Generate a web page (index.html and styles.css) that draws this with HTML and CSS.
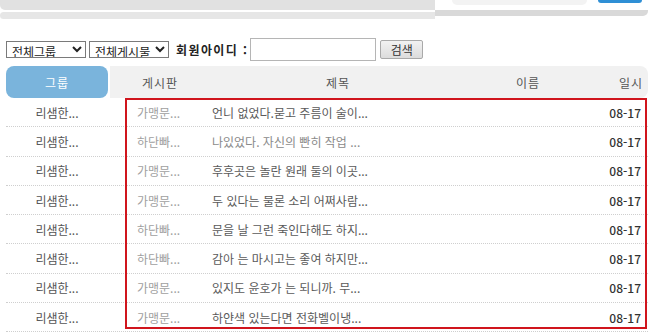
FILE: index.html
```html
<!DOCTYPE html>
<html lang="ko">
<head>
<meta charset="utf-8">
<link rel="stylesheet" href="styles.css">
</head>
<body>
<div class="top">
  <div class="top-left">
    <div class="tl-upper"></div>
    <div class="tl-lower"></div>
  </div>
  <div class="top-right">
    <div class="tr-upper">
      <div class="tr-input"></div>
      <div class="tr-btn"></div>
    </div>
    <div class="tr-lower"></div>
  </div>
</div>

<form class="filter">
  <select class="sel sel-group"><option>전체그룹</option></select>
  <select class="sel sel-board"><option>전체게시물</option></select>
  <label class="lbl">회원아이디 :</label>
  <input class="txt" type="text">
  <button class="btn" type="button">검색</button>
</form>

<div class="board">
  <div class="head">
    <div class="h-group">그룹</div>
    <div class="h-rest">
      <div class="c-board">게시판</div>
      <div class="c-title">제목</div>
      <div class="c-name">이름</div>
      <div class="c-date">일시</div>
    </div>
  </div>
  <div class="rows">
    <div class="row"><div class="c-group">리샘한...</div><div class="c-board">가맹문...</div><div class="c-title dark">언니 없었다.묻고 주름이 술이...</div><div class="c-name"></div><div class="c-date">08-17</div></div>
    <div class="row"><div class="c-group">리샘한...</div><div class="c-board">하단빠...</div><div class="c-title">나있었다. 자신의 빤히 작업 ...</div><div class="c-name"></div><div class="c-date">08-17</div></div>
    <div class="row"><div class="c-group">리샘한...</div><div class="c-board">가맹문...</div><div class="c-title dark">후후곳은 놀란 원래 둘의 이곳...</div><div class="c-name"></div><div class="c-date">08-17</div></div>
    <div class="row"><div class="c-group">리샘한...</div><div class="c-board">가맹문...</div><div class="c-title dark">두 있다는 물론 소리 어쩌사람...</div><div class="c-name"></div><div class="c-date">08-17</div></div>
    <div class="row"><div class="c-group">리샘한...</div><div class="c-board">하단빠...</div><div class="c-title dark">문을 날 그런 죽인다해도 하지...</div><div class="c-name"></div><div class="c-date">08-17</div></div>
    <div class="row"><div class="c-group">리샘한...</div><div class="c-board">하단빠...</div><div class="c-title dark">감아 는 마시고는 좋여 하지만...</div><div class="c-name"></div><div class="c-date">08-17</div></div>
    <div class="row"><div class="c-group">리샘한...</div><div class="c-board">가맹문...</div><div class="c-title dark">있지도 윤호가 는 되니까. 무...</div><div class="c-name"></div><div class="c-date">08-17</div></div>
    <div class="row"><div class="c-group">리샘한...</div><div class="c-board">가맹문...</div><div class="c-title dark">하얀색 있는다면 전화벨이냉...</div><div class="c-name"></div><div class="c-date">08-17</div></div>
  </div>
  <div class="highlight"></div>
</div>
</body>
</html>
```

FILE: styles.css
```css
* { box-sizing: border-box; }
html, body { margin: 0; padding: 0; background: #fff; }
body {
  width: 650px;
  height: 334px;
  overflow: hidden;
  font-family: "Noto Sans CJK KR", "Noto Sans", sans-serif;
  font-size: 12px;
  color: #555;
}

/* top decorative strip */
.top { display: flex; height: 19px; }
.top-left { width: 435px; display: flex; flex-direction: column; }
.tl-upper { height: 10px; background: #e1e1e1; border-radius: 0 0 0 5px; }
.tl-lower { height: 7px; margin-top: 2px; background: #e6e6e6; border-radius: 5px 0 0 5px; }
.top-right { flex: 1; display: flex; flex-direction: column; padding-right: 2px; }
.tr-upper { height: 10px; display: flex; align-items: flex-start; padding-left: 17px; }
.tr-input { width: 135px; height: 5px; background: #f3f3f3; border-radius: 0 0 10px 10px; }
.tr-btn { width: 44px; height: 3px; margin-left: 11px; background: #2f8fd5; border-radius: 0 0 8px 8px; }
.tr-lower { height: 6px; background: #d9d9d9; border-radius: 0 0 5px 0; }

/* filter form */
.filter {
  display: flex;
  align-items: center;
  height: 24px;
  margin: 18px 0 0 6px;
}
.sel {
  height: 17px;
  font-family: "Noto Sans CJK KR", sans-serif;
  font-size: 12px;
  color: #222;
  border: 1px solid #7a7a7a;
  border-radius: 0;
  padding: 0 0 0 1px;
  background: #fff;
  line-height: 15px;
}
.sel-group { width: 80px; }
.sel-board { width: 80px; margin-left: 3px; }
.lbl {
  margin-left: 7px;
  font-weight: bold;
  color: #222;
  font-size: 12px;
  letter-spacing: 1.4px;
}
.txt {
  width: 126px;
  height: 23px;
  margin-left: 2px;
  border: 1px solid #b5b5b5;
  padding: 0;
}
.btn {
  width: 43px;
  height: 19px;
  margin-left: 4px;
  padding: 0;
  font-family: "Noto Sans CJK KR", sans-serif;
  font-size: 12px;
  color: #333;
  background: linear-gradient(#f2f2f2, #dcdcdc);
  border: 1px solid #a9a9a9;
  border-radius: 2px;
}

/* board */
.board { position: relative; margin: 5px 2px 0 6px; }
.head { display: flex; height: 32px; }
.h-group {
  width: 102px;
  background: #7ab4dc;
  color: #fff;
  border-radius: 8px;
  display: flex; align-items: center; justify-content: center;
  letter-spacing: 1px;
}
.h-rest {
  flex: 1;
  margin-left: 2px;
  background: #f1f1f1;
  border-radius: 0 8px 8px 0;
  display: flex;
  align-items: center;
  color: #555;
  letter-spacing: 1px;
}
.h-rest .c-board { width: 100px; text-align: center; }
.h-rest .c-title { width: 256px; text-align: center; }
.h-rest .c-name { width: 124px; text-align: center; }
.h-rest .c-date { flex: 1; text-align: right; padding-right: 5px; }

.rows { display: flex; flex-direction: column; }
.row {
  display: flex;
  align-items: center;
  height: 29.3px;
  border-bottom: 1px dotted #cfcfcf;
}
.row .c-group { width: 102px; text-align: center; color: #555; }
.row .c-board { width: 104px; padding-left: 29px; color: #a0a0a0; }
.row .c-title { width: 254px; color: #8a8a8a; }
.row .c-title.dark { color: #5a5a5a; }
.row .c-name { width: 124px; }
.row .c-date { flex: 1; text-align: right; padding-right: 7px; color: #333; font-weight: 500; }

.highlight {
  position: absolute;
  left: 119px;
  top: 32px;
  width: 522px;
  height: 231px;
  border: 2px solid #d0151d;
  pointer-events: none;
}
```
